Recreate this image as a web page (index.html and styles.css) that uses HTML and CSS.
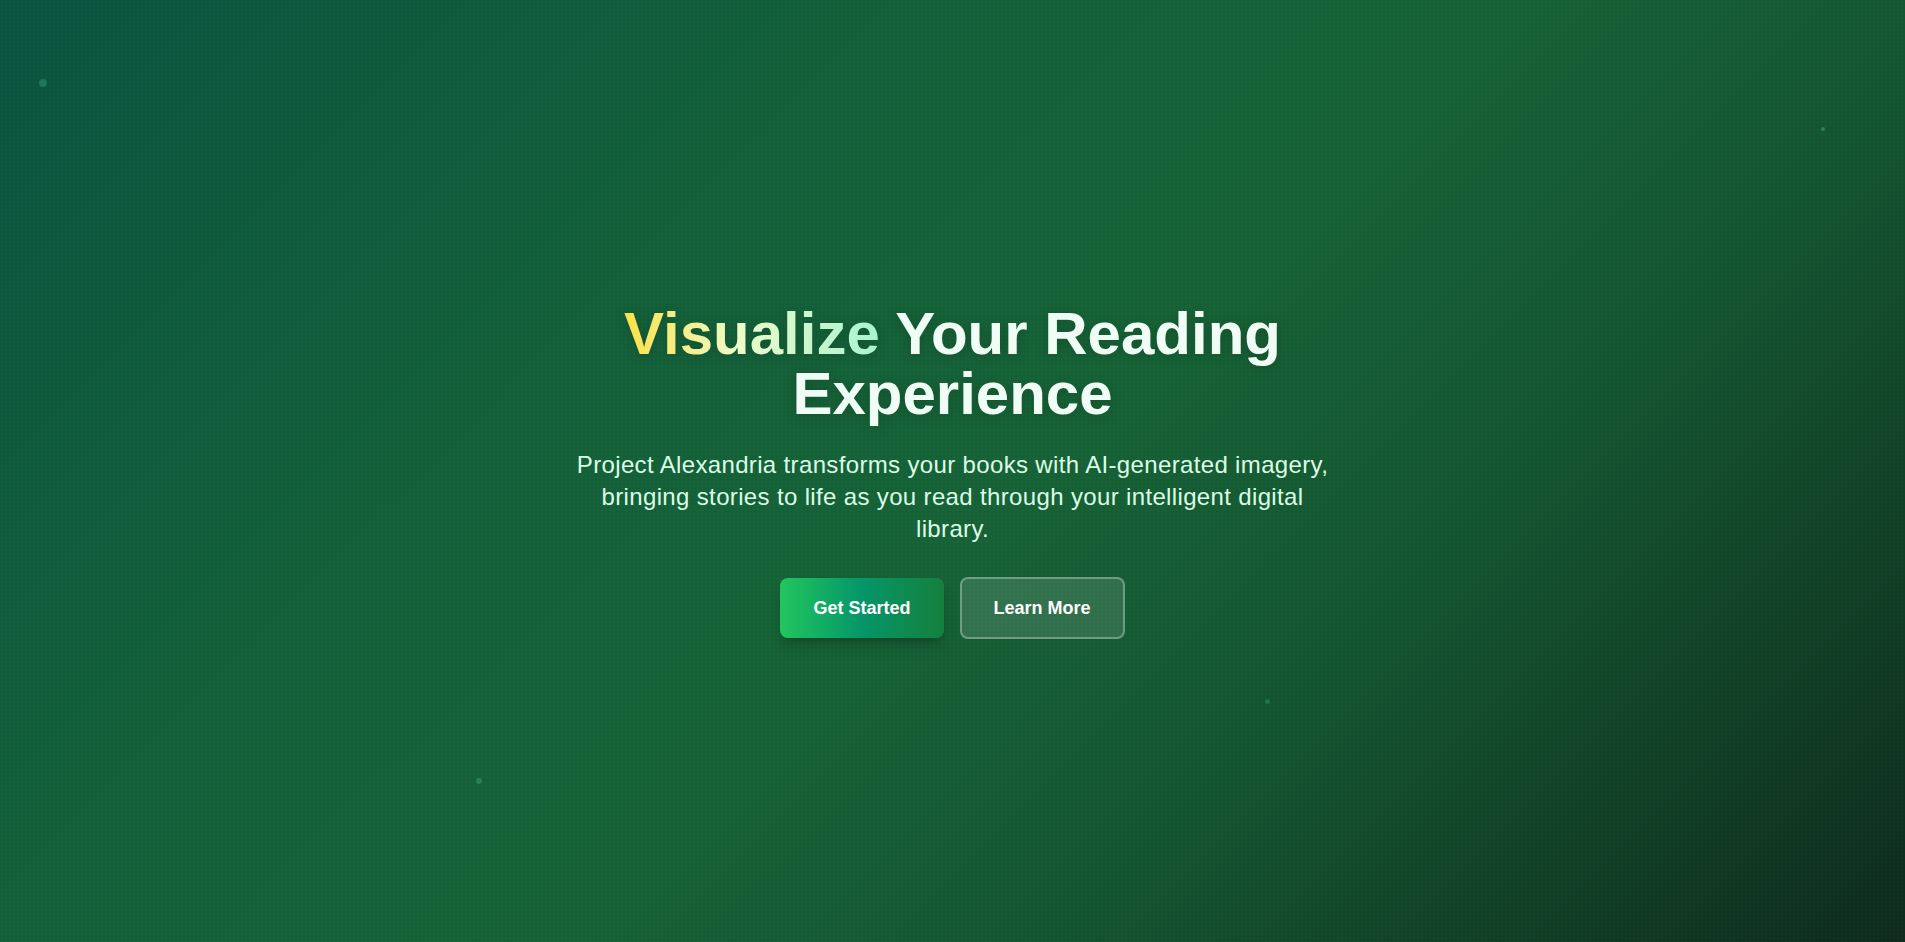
FILE: index.html
```html
<!DOCTYPE html>
<html lang="en">
<head>
<meta charset="utf-8">
<title>Project Alexandria</title>
<link rel="stylesheet" href="styles.css">
</head>
<body>
<main class="hero">
  <span class="spark spark-a"></span>
  <span class="spark spark-b"></span>
  <span class="spark spark-c"></span>
  <span class="spark spark-d"></span>
  <section class="hero-content">
    <h1 class="title"><span class="title-accent">Visualize</span> Your Reading<br>Experience</h1>
    <p class="lead">Project Alexandria transforms your books with AI-generated imagery, bringing stories to life as you read through your intelligent digital library.</p>
    <div class="actions">
      <a class="btn btn-primary" href="#">Get Started</a>
      <a class="btn btn-secondary" href="#">Learn More</a>
    </div>
  </section>
</main>
</body>
</html>
```

FILE: styles.css
```css
* { box-sizing: border-box; }

html, body {
  margin: 0;
  padding: 0;
}

body {
  font-family: "Liberation Sans", Arial, sans-serif;
  color: #f0fdf4;
}

.hero {
  position: relative;
  min-height: 942px;
  display: flex;
  align-items: center;
  justify-content: center;
  overflow: hidden;
  background:
    radial-gradient(rgba(255,255,255,0.02) 1px, transparent 1px) 0 0 / 4px 4px,
    linear-gradient(135deg, #09533f 0%, #125f3a 30%, #166236 52%, #135430 70%, #0e2b1c 100%);
}

.spark {
  position: absolute;
  border-radius: 50%;
  background: rgba(110, 231, 183, 0.22);
}
.spark-a { left: 39px; top: 79px; width: 8px; height: 8px; }
.spark-b { left: 1821px; top: 127px; width: 4px; height: 4px; background: rgba(74, 222, 128, 0.35); }
.spark-c { left: 476px; top: 778px; width: 6px; height: 6px; }
.spark-d { left: 1265px; top: 699px; width: 5px; height: 5px; background: rgba(74, 222, 128, 0.22); }

.hero-content {
  display: flex;
  flex-direction: column;
  align-items: center;
  text-align: center;
}

.title {
  margin: 0 0 25px;
  font-size: 60px;
  line-height: 60px;
  font-weight: 700;
  color: #f0fdf4;
  filter: drop-shadow(0 2px 6px rgba(0, 0, 0, 0.18));
}

.title-accent {
  background: linear-gradient(90deg, #fde047 0%, #ecfccb 45%, #a7f3d0 100%);
  -webkit-background-clip: text;
  background-clip: text;
  color: transparent;
}

.lead {
  margin: 0 0 32px;
  max-width: 760px;
  font-size: 24px;
  line-height: 32px;
  letter-spacing: 0.35px;
  color: #dcfce7;
}

.actions {
  display: flex;
  align-items: center;
  gap: 16px;
}

.btn {
  display: inline-flex;
  align-items: center;
  justify-content: center;
  padding: 16px 33px;
  font-size: 18px;
  line-height: 28px;
  font-weight: 700;
  color: #ffffff;
  text-decoration: none;
  border-radius: 8px;
}

.btn-primary {
  background: linear-gradient(90deg, #22c55e 0%, #059669 50%, #15803d 100%);
  box-shadow: 0 10px 15px -3px rgba(0, 0, 0, 0.2), 0 4px 6px -4px rgba(0, 0, 0, 0.2);
}

.btn-secondary {
  padding: 15px 32px;
  background: rgba(255, 255, 255, 0.12);
  border: 2px solid rgba(255, 255, 255, 0.3);
}
```
